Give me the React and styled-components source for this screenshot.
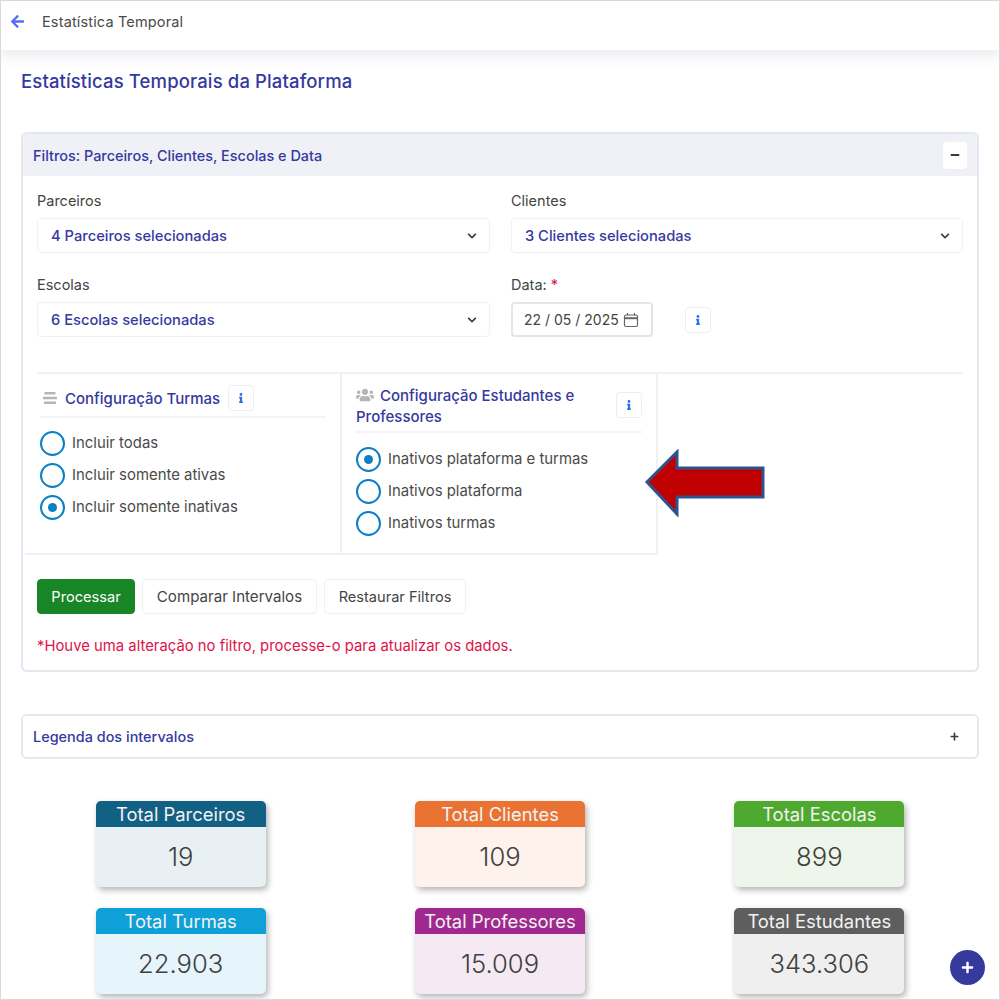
import React from "react";
import styled, { createGlobalStyle } from "styled-components";
import { FaArrowLeft, FaChevronDown, FaInfo, FaMinus, FaPlus, FaUsers } from "react-icons/fa";

const Global = createGlobalStyle`
  html, body { margin: 0; padding: 0; background: #fff; }
  * { box-sizing: border-box; }
  body { font-family: Inter, "Open Sans", "Liberation Sans", sans-serif; color: #444; }
`;
const INDIGO = "#3539a0";

const Page = styled.div`
  position: relative; width: 1000px; height: 1000px; overflow: hidden;
  border: 1px solid #d9d9d9; background: #fff;
`;
const TopBar = styled.header`
  height: 49px; display: flex; align-items: center; padding: 0 9px 9px 9px; gap: 17px;
  background: #fff; box-shadow: 0 4px 14px rgba(40, 50, 90, 0.12);
  font-size: 14.5px; letter-spacing: 0.15px; color: #4a4a4a;
  svg { color: #5a6bf0; font-size: 15px; }
`;
const Content = styled.main`padding: 0 20px;`;
const Title = styled.h1`
  margin: 20px 0 39px; font-size: 18.5px; letter-spacing: 0.13px; line-height: 23px; font-weight: 500; color: ${INDIGO};
`;
const Panel = styled.section`
  border: 2px solid #e4e7f0; border-radius: 6px; background: #fff; overflow: hidden;
  margin-bottom: ${(p) => p.$mb || 0}px;
`;
const PanelHead = styled.div`
  height: ${(p) => p.$h}px; display: flex; align-items: center; justify-content: space-between;
  padding: 0 10px; background: ${(p) => (p.$tint ? "#f0f1f6" : "#fff")};
  font-size: 14.45px; font-weight: 500; color: ${INDIGO};
`;
const IconBtn = styled.span`
  width: 24px; height: 27px; display: flex; align-items: center; justify-content: center;
  background: #fff; border-radius: 4px; color: #3a3a3a; font-size: 10px;
`;
const PanelBody = styled.div`padding: 15px 14px 0 14px; height: 494px;`;
const FormGrid = styled.div`
  display: grid; grid-template-columns: 453px 452px; column-gap: 21px; row-gap: 22px;
`;
const Field = styled.div`display: flex; flex-direction: column;`;
const Label = styled.label`
  font-size: 14.5px; line-height: 20px; margin-bottom: 7px; color: #444; font-weight: 400;
  em { color: #dc143c; font-style: normal; }
`;
const Select = styled.div`
  height: 35px; display: flex; align-items: center; justify-content: space-between;
  padding: 0 12px 0 13px; border: 1px solid #f1f1f4; border-radius: 4px;
  font-size: 14.7px; font-weight: 500; color: ${INDIGO};
  svg { color: #3a3a3a; font-size: 10px; }
`;
const DateRow = styled.div`display: flex; align-items: center; gap: 32px;`;
const DateBox = styled.div`
  width: 142px; height: 35px; display: flex; align-items: center; gap: 4px; padding: 0 11px;
  border: 2px solid #e5e5e5; border-radius: 4px; font-size: 14px; color: #444; white-space: nowrap;
`;
const InfoBtn = styled.span`
  flex: none; width: 26px; height: 26px; display: flex; align-items: center; justify-content: center;
  border: 1px solid #eceef3; border-radius: 4px; background: #fff; color: #2a6ef0; font-size: 10px;
  margin-top: ${(p) => p.$mt || 0}px;
`;
const Divider = styled.hr`
  border: 0; height: 2px; background: #f0f1f6; margin: 35px 0 0;
`;
const ConfigRow = styled.div`
  display: flex; align-items: flex-start; margin-left: -12px;
`;
const ConfigCol = styled.div`
  width: ${(p) => p.$w}px; height: 181px; padding: 11px 14px 0 ${(p) => p.$left}px;
  border-right: 2px solid #f0f1f6; border-bottom: 2px solid #f0f1f6;
`;
const ConfigHead = styled.div`
  height: ${(p) => p.$h}px; padding-bottom: ${(p) => (p.$top ? 0 : 5)}px;
  display: flex; align-items: ${(p) => (p.$top ? "flex-start" : "center")};
  justify-content: ${(p) => (p.$top ? "space-between" : "flex-start")};
  gap: 8px; border-bottom: 2px solid #f3f3f8; margin-bottom: ${(p) => p.$mb}px;
`;
const ConfigTitle = styled.div`
  font-size: 15px; line-height: 21px; font-weight: 500; color: ${INDIGO};
  svg { color: #b5b5b5; font-size: 18px; vertical-align: -3px; margin-right: 6px; }
`;
const BarsSvg = styled.svg`margin-left: 3px; flex: none;`;
const RadioList = styled.div`display: flex; flex-direction: column;`;
const RadioRow = styled.div`
  height: 32px; display: flex; align-items: center; gap: 7px; font-size: 14.9px; color: #4a4a4a;
`;
const RadioDot = styled.span`
  width: 25px; height: 25px; border-radius: 50%; border: 2px solid #0b7fc4; flex: none;
  display: flex; align-items: center; justify-content: center;
  &::after {
    content: ""; width: 9px; height: 9px; border-radius: 50%;
    background: ${(p) => (p.$on ? "#0b7fc4" : "transparent")};
  }
`;
const ArrowSvg = styled.svg`margin: 75px 0 0 -14px; flex: none;`;
const Buttons = styled.div`display: flex; gap: 7px; margin-top: 24px;`;
const Btn = styled.span`
  height: 35px; width: ${(p) => p.$w}px; display: flex; align-items: center; justify-content: center;
  border-radius: 4px; font-size: ${(p) => p.$size || 14.6}px; white-space: nowrap;
  background: ${(p) => (p.$primary ? "#188526" : "#fff")};
  color: ${(p) => (p.$primary ? "#fff" : "#444")};
  border: 1px solid ${(p) => (p.$primary ? "#188526" : "#f1f1f4")};
`;
const Warning = styled.p`margin: 22px 0 0; font-size: 14.85px; line-height: 20px; color: #e0124a; white-space: nowrap;`;
const Stats = styled.div`
  display: grid; grid-template-columns: repeat(3, 1fr); row-gap: 21px; justify-items: center; margin-top: 42px;
`;
const Card = styled.div`
  width: 170px; border-radius: 5px; overflow: hidden; background: ${(p) => p.$bg};
  box-shadow: 2px 3px 6px rgba(0, 0, 0, 0.3); text-align: center;
`;
const CardHead = styled.div`
  height: 26px; line-height: 26px; background: ${(p) => p.$c}; color: #f2f2f2; font-size: 18.4px; white-space: nowrap;
`;
const CardValue = styled.div`
  height: 60px; line-height: 60px; font-size: 25.6px; font-weight: 300; color: #404040;
`;
const Fab = styled.span`
  position: absolute; left: 949px; top: 949px; width: 35px; height: 35px; border-radius: 50%;
  background: #353a9c; color: #fff; display: flex; align-items: center; justify-content: center; font-size: 13px;
`;
const PlusMark = styled.span`display: flex; color: #3a3a3a; font-size: 9px; margin-right: 8px;`;

const CalendarIcon = () => (
  <svg width="16" height="16" viewBox="0 0 16 16" fill="none" stroke="#666" strokeWidth="1.2">
    <rect x="1.5" y="3" width="13" height="11.5" rx="1.5" />
    <path d="M1.5 6.2h13" strokeWidth="2" />
    <path d="M4.5 1v2.5M11.5 1v2.5" />
  </svg>
);

const BarsIcon = () => (
  <BarsSvg width="14" height="14" viewBox="0 0 14 14" fill="#b5b5b5">
    <rect x="1.5" y="1" width="11" height="2.6" rx="0.6" />
    <rect x="0" y="5.7" width="14" height="2.6" rx="0.6" />
    <rect x="1" y="10.4" width="12" height="2.6" rx="0.6" />
  </BarsSvg>
);

const cards = [
  ["Total Parceiros", "19", "#126083", "#e9f0f3"],
  ["Total Clientes", "109", "#ea7233", "#fdf2ec"],
  ["Total Escolas", "899", "#4fa92f", "#edf6ea"],
  ["Total Turmas", "22.903", "#0fa0d8", "#e6f5fb"],
  ["Total Professores", "15.009", "#a0298f", "#f5eaf4"],
  ["Total Estudantes", "343.306", "#5e5e5e", "#efefef"],
];

const Radios = ({ items, on }) => (
  <RadioList>
    {items.map((t, i) => (
      <RadioRow key={t}><RadioDot $on={i === on} />{t}</RadioRow>
    ))}
  </RadioList>
);

export default function App() {
  return (
    <Page>
      <Global />
      <TopBar><FaArrowLeft />Estatística Temporal</TopBar>
      <Content>
        <Title>Estatísticas Temporais da Plataforma</Title>
        <Panel $mb={42}>
          <PanelHead $h={42} $tint>
            Filtros: Parceiros, Clientes, Escolas e Data
            <IconBtn><FaMinus /></IconBtn>
          </PanelHead>
          <PanelBody>
            <FormGrid>
              <Field>
                <Label>Parceiros</Label>
                <Select>4 Parceiros selecionadas<FaChevronDown /></Select>
              </Field>
              <Field>
                <Label>Clientes</Label>
                <Select>3 Clientes selecionadas<FaChevronDown /></Select>
              </Field>
              <Field>
                <Label>Escolas</Label>
                <Select>6 Escolas selecionadas<FaChevronDown /></Select>
              </Field>
              <Field>
                <Label>Data: <em>*</em></Label>
                <DateRow>
                  <DateBox>22 / 05 / 2025 <CalendarIcon /></DateBox>
                  <InfoBtn><FaInfo /></InfoBtn>
                </DateRow>
              </Field>
            </FormGrid>
            <Divider />
            <ConfigRow>
              <ConfigCol $w={317} $left={15}>
                <ConfigHead $h={33} $mb={9}>
                  <BarsIcon />
                  <ConfigTitle>Configuração Turmas</ConfigTitle>
                  <InfoBtn><FaInfo /></InfoBtn>
                </ConfigHead>
                <Radios items={["Incluir todas", "Incluir somente ativas", "Incluir somente inativas"]} on={2} />
              </ConfigCol>
              <ConfigCol $w={316} $left={14}>
                <ConfigHead $h={48} $mb={10} $top>
                  <ConfigTitle><FaUsers />Configuração Estudantes e Professores</ConfigTitle>
                  <InfoBtn $mt={7}><FaInfo /></InfoBtn>
                </ConfigHead>
                <Radios items={["Inativos plataforma e turmas", "Inativos plataforma", "Inativos turmas"]} on={0} />
              </ConfigCol>
              <ArrowSvg width="122" height="68" viewBox="0 0 122 68">
                <polygon points="3,33 33,3 33,19 119,19 119,48 33,48 33,65" fill="#c00000" stroke="#2f528f" strokeWidth="3" />
              </ArrowSvg>
            </ConfigRow>
            <Buttons>
              <Btn $primary $w={98}>Processar</Btn>
              <Btn $w={175} $size={15.1}>Comparar Intervalos</Btn>
              <Btn $w={142}>Restaurar Filtros</Btn>
            </Buttons>
            <Warning>*Houve uma alteração no filtro, processe-o para atualizar os dados.</Warning>
          </PanelBody>
        </Panel>
        <Panel>
          <PanelHead $h={41}>
            Legenda dos intervalos
            <PlusMark><FaPlus /></PlusMark>
          </PanelHead>
        </Panel>
        <Stats>
          {cards.map(([t, v, c, bg]) => (
            <Card key={t} $bg={bg}>
              <CardHead $c={c}>{t}</CardHead>
              <CardValue>{v}</CardValue>
            </Card>
          ))}
        </Stats>
      </Content>
      <Fab><FaPlus /></Fab>
    </Page>
  );
}
